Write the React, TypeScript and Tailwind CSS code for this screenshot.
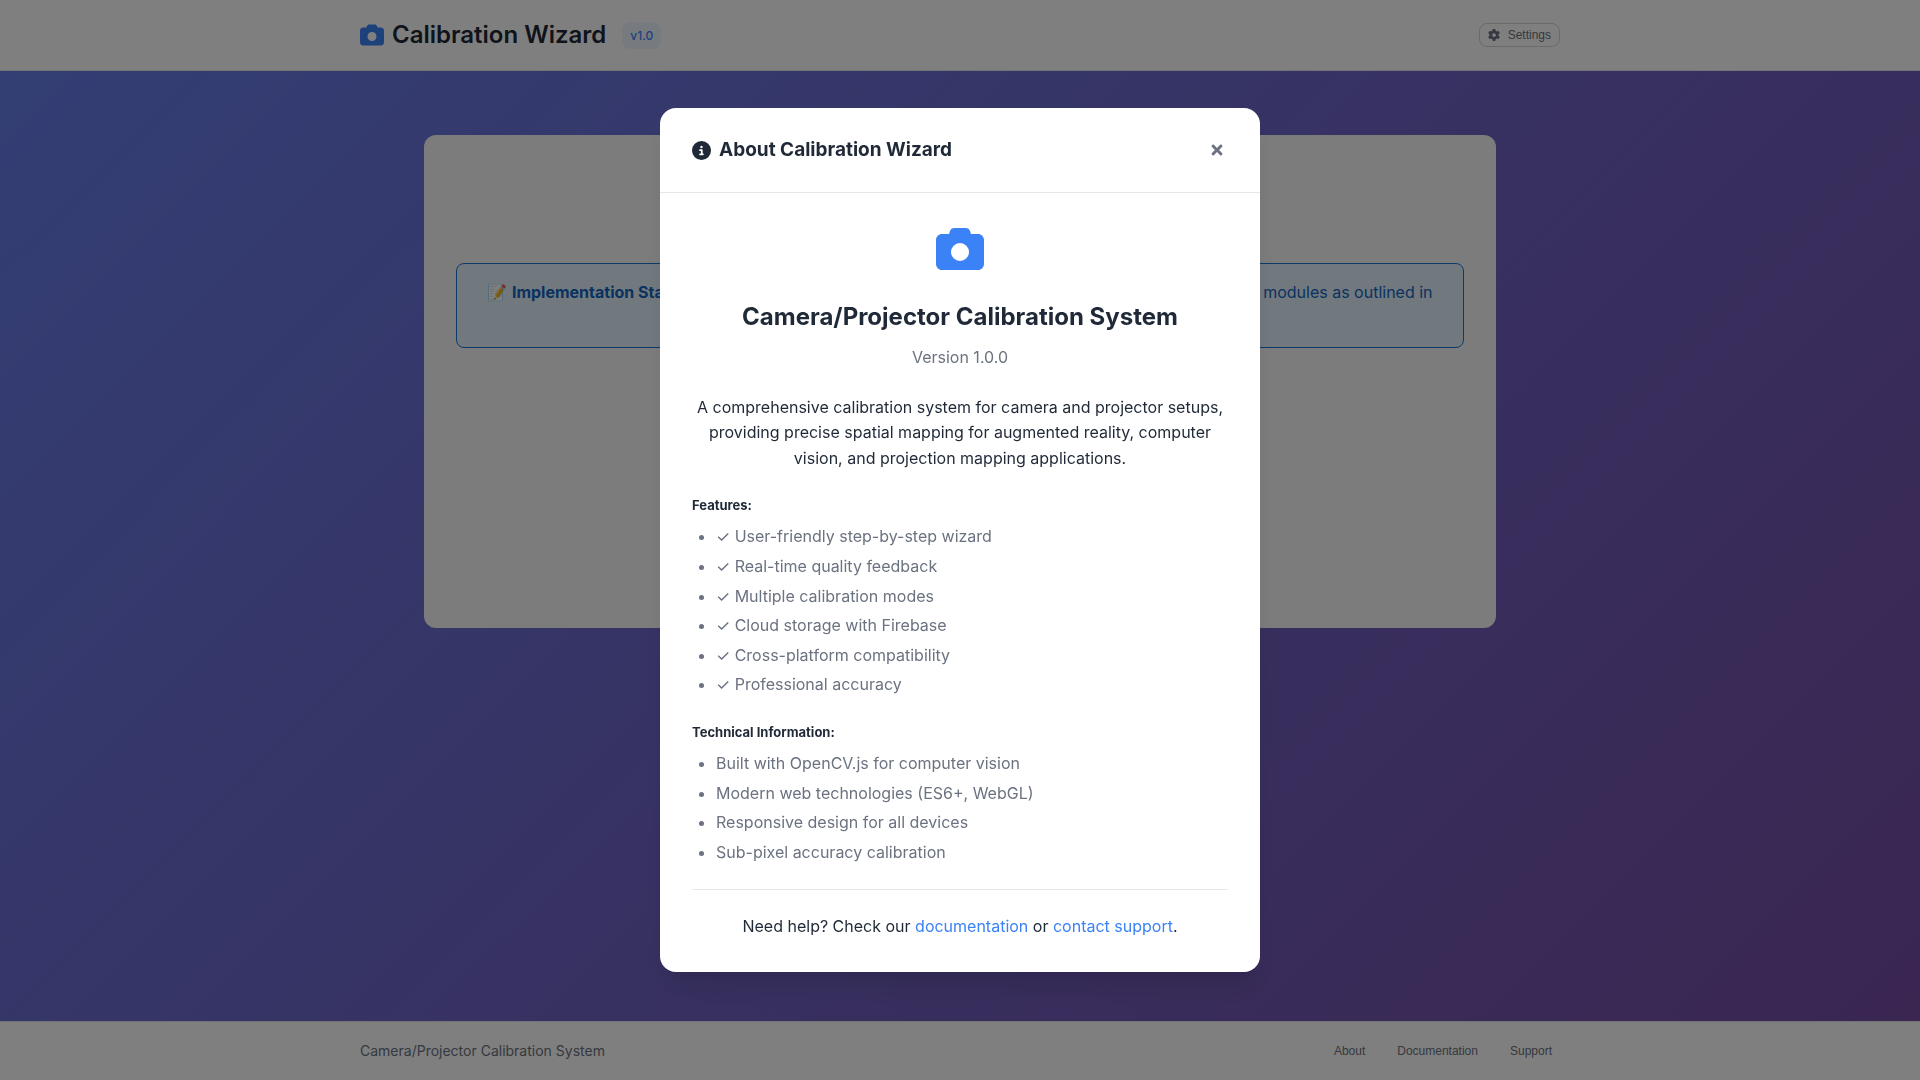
import { FaTimes } from "react-icons/fa";
import { FaCamera, FaCircleInfo, FaGear } from "react-icons/fa6";

const features = [
  "User-friendly step-by-step wizard",
  "Real-time quality feedback",
  "Multiple calibration modes",
  "Cloud storage with Firebase",
  "Cross-platform compatibility",
  "Professional accuracy",
];

const technical = [
  "Built with OpenCV.js for computer vision",
  "Modern web technologies (ES6+, WebGL)",
  "Responsive design for all devices",
  "Sub-pixel accuracy calibration",
];

function Header() {
  return (
    <header className="border-b border-gray-200 bg-white">
      <div className="mx-auto flex h-[70px] max-w-[1200px] items-center justify-between">
        <div className="flex items-center gap-4">
          <h1 className="flex items-center gap-2 text-2xl font-semibold">
            <FaCamera size={24} color="#3b82f6" />
            Calibration Wizard
          </h1>
          <span className="rounded-lg bg-[#eff6ff] px-2 py-1 text-xs leading-[19px] font-medium text-[#3b82f6]">v1.0</span>
        </div>
        <button className="flex h-6 items-center gap-2 rounded-lg border border-gray-300 px-2 font-['Liberation_Sans',sans-serif] text-xs text-[#6b7280]">
          <FaGear size={12} />
          Settings
        </button>
      </div>
    </header>
  );
}

function Footer() {
  return (
    <footer className="border-t border-gray-200 bg-white">
      <div className="mx-auto flex h-[58px] max-w-[1200px] items-center justify-between text-sm text-[#6b7280]">
        <span>Camera/Projector Calibration System</span>
        <nav className="flex gap-4 font-['Liberation_Sans',sans-serif] text-xs">
          {["About", "Documentation", "Support"].map((label) => (
            <button key={label} className="px-2 py-1">{label}</button>
          ))}
        </nav>
      </div>
    </footer>
  );
}

function AboutDialog() {
  return (
    <div className="fixed inset-0 flex items-center justify-center bg-black/50">
      <div
        role="dialog"
        aria-modal="true"
        aria-labelledby="about-title"
        className="w-full max-w-[600px] overflow-hidden rounded-2xl bg-white shadow-[0_20px_25px_-5px_rgba(0,0,0,0.1),0_10px_10px_-5px_rgba(0,0,0,0.04)]"
      >
        <div className="flex items-center justify-between border-b border-gray-200 px-8 py-[26px]">
          <h3 id="about-title" className="flex items-center gap-2 text-[19px] leading-8 font-bold">
            <FaCircleInfo size={19} />
            About Calibration Wizard
          </h3>
          <button aria-label="Close" className="px-[3px] text-[#6b7280]">
            <FaTimes size={16} />
          </button>
        </div>
        <div className="p-8">
          <div className="text-center">
            <FaCamera className="mx-auto" size={48} color="#3b82f6" />
            <h2 className="mt-6 text-2xl leading-10 font-bold">Camera/Projector Calibration System</h2>
            <p className="mt-2 text-[#6b7280]">Version 1.0.0</p>
            <p className="mt-6">
              A comprehensive calibration system for camera and projector setups, providing precise spatial mapping for
              augmented reality, computer vision, and projection mapping applications.
            </p>
          </div>
          <h5 className="mt-6 text-[13px] leading-[21px] font-bold">Features:</h5>
          <ul className="mt-2 list-disc space-y-1 pl-6 text-[#6b7280]">
            {features.map((item) => (
              <li key={item}>✓ {item}</li>
            ))}
          </ul>
          <h5 className="mt-6 text-[13px] leading-[21px] font-bold">Technical Information:</h5>
          <ul className="mt-2 list-disc space-y-1 pl-6 text-[#6b7280]">
            {technical.map((item) => (
              <li key={item}>{item}</li>
            ))}
          </ul>
          <p className="mt-6 border-t border-gray-200 pt-6 text-center">
            Need help? Check our <a href="#documentation" className="text-[#3b82f6]">documentation</a> or{" "}
            <a href="#support" className="text-[#3b82f6]">contact support</a>.
          </p>
        </div>
      </div>
    </div>
  );
}

export default function App() {
  return (
    <div className="flex min-h-screen flex-col bg-[linear-gradient(135deg,#667eea_0%,#764ba2_100%)] font-[Inter,sans-serif] text-base leading-[1.6] text-[#1f2937]">
      <Header />
      <main className="mx-auto w-full max-w-[1200px] flex-1 p-16">
        <section className="min-h-[493px] rounded-xl bg-[#f8f8f8] px-8 pt-32 text-center">
          <div className="rounded-lg border border-[#1976d2] bg-[#e3f2fd] px-6 py-4 text-[#1565c0]">
            📝 <strong className="font-bold">Implementation Status:</strong> This is the application shell. The stage
            components will be implemented in modules as outlined in the project plan.
          </div>
        </section>
      </main>
      <Footer />
      <AboutDialog />
    </div>
  );
}
